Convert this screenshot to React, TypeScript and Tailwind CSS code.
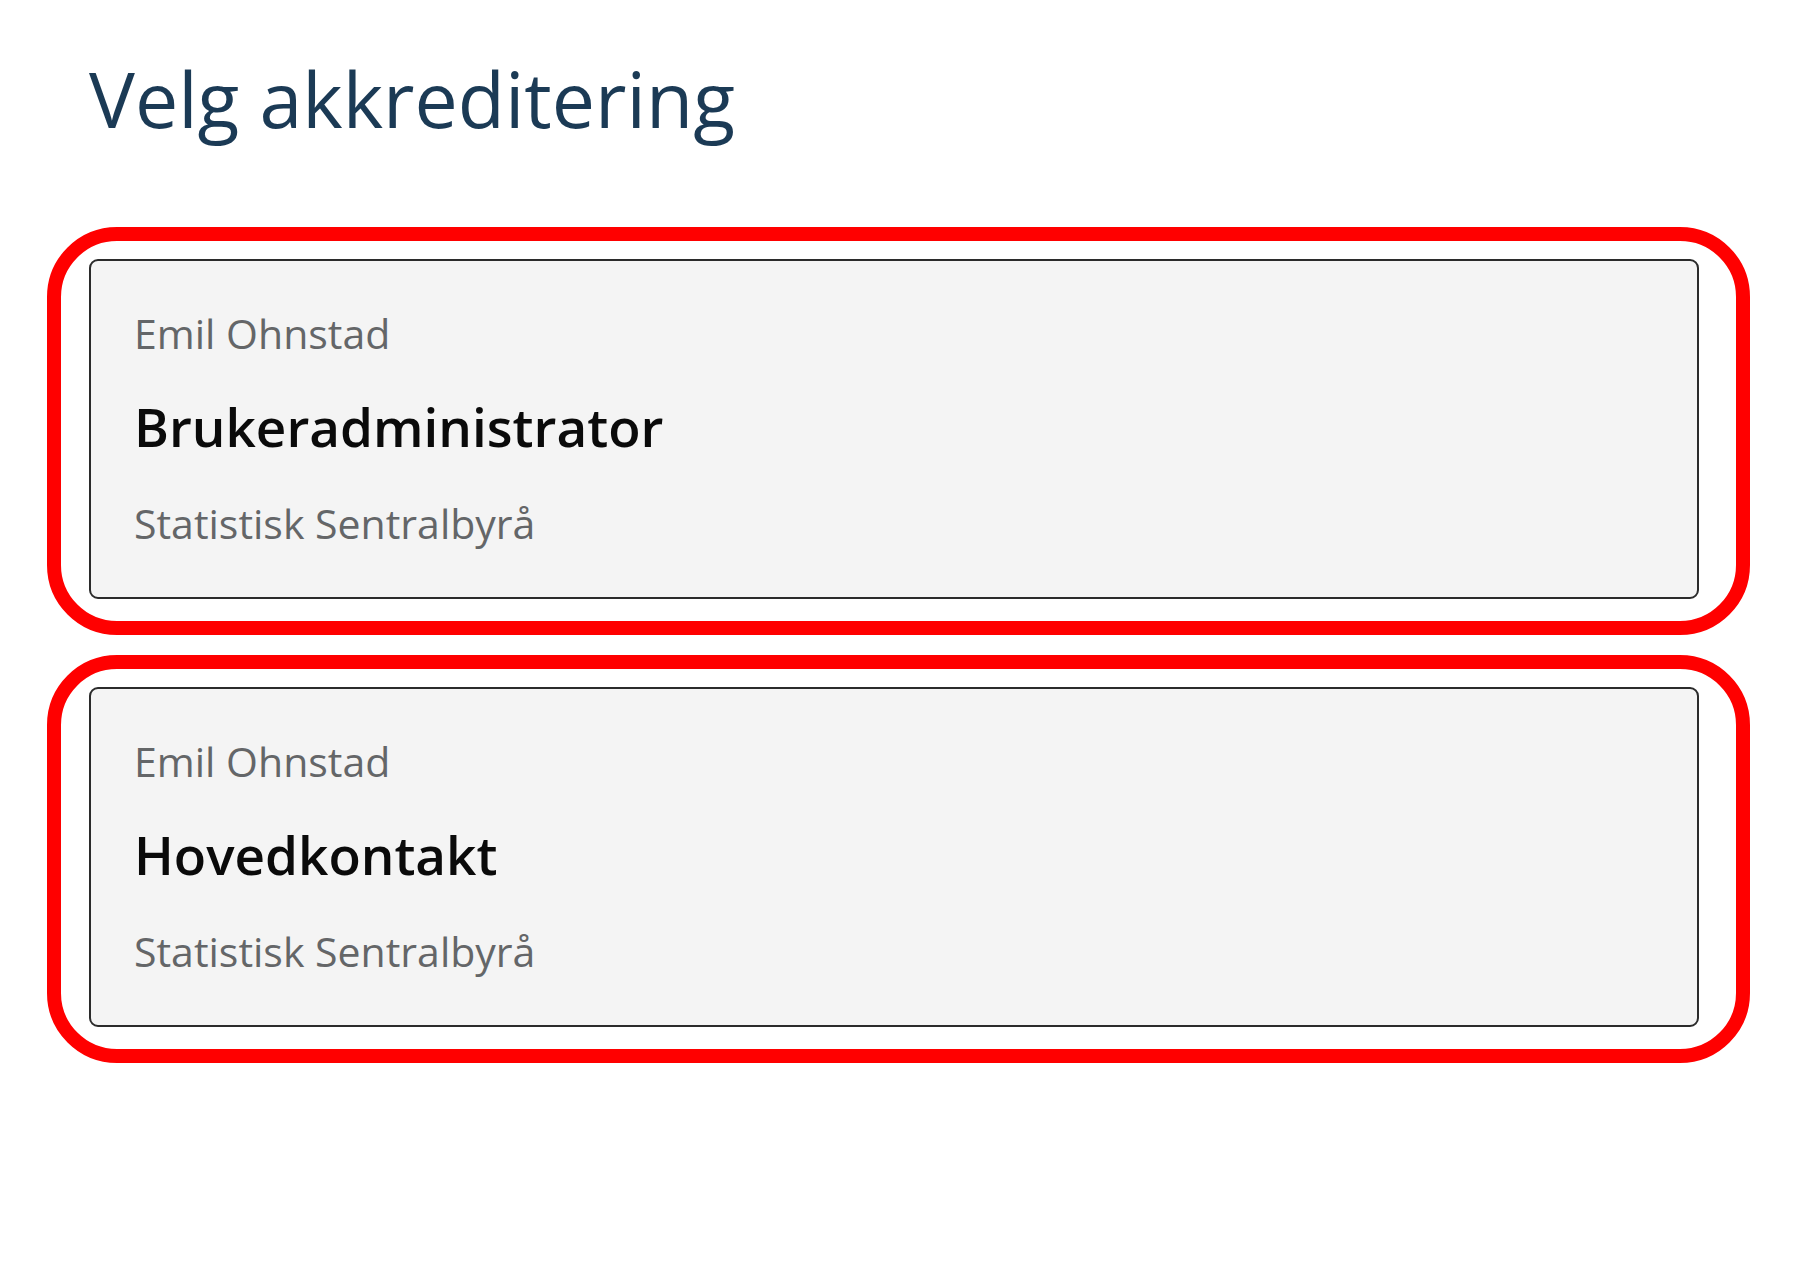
import React from 'react';

interface Accreditation {
  id: number;
  person: string;
  role: string;
  organisation: string;
}

const accreditations: Accreditation[] = [
  { id: 1, person: 'Emil Ohnstad', role: 'Brukeradministrator', organisation: 'Statistisk Sentralbyrå' },
  { id: 2, person: 'Emil Ohnstad', role: 'Hovedkontakt', organisation: 'Statistisk Sentralbyrå' },
];

const App = () => {
  return (
    <div className="min-h-screen bg-white font-['Open_Sans','Noto_Sans',sans-serif]">
      <div className="pl-[47px] pr-[69px] pt-[60px]">
        <h1 className="ml-[42px] text-[77px] leading-none font-normal text-[#1b3a55]">Velg akkreditering</h1>

        {/* Accreditation choices */}
        <div className="mt-[90px] flex flex-col gap-[20px]">
          {accreditations.map(item => (
            <div
              key={item.id}
              className="rounded-[70px] border-[14px] border-[#ff0000] pt-[18px] pb-[22px] pl-[28px] pr-[37px]"
            >
              <button className="w-full text-left rounded-[9px] border-2 border-[#2b2b2b] bg-[#f4f4f4] pl-[43px] pt-[52px] pb-[53px] flex flex-col">
                <span className="text-[41px] leading-none text-[#646668]">{item.person}</span>
                <span className="mt-[46px] text-[53px] leading-none font-semibold text-[#0a0a0a]">{item.role}</span>
                <span className="mt-[50px] text-[41px] leading-none text-[#646668]">{item.organisation}</span>
              </button>
            </div>
          ))}
        </div>
      </div>
    </div>
  );
};

export default App;
